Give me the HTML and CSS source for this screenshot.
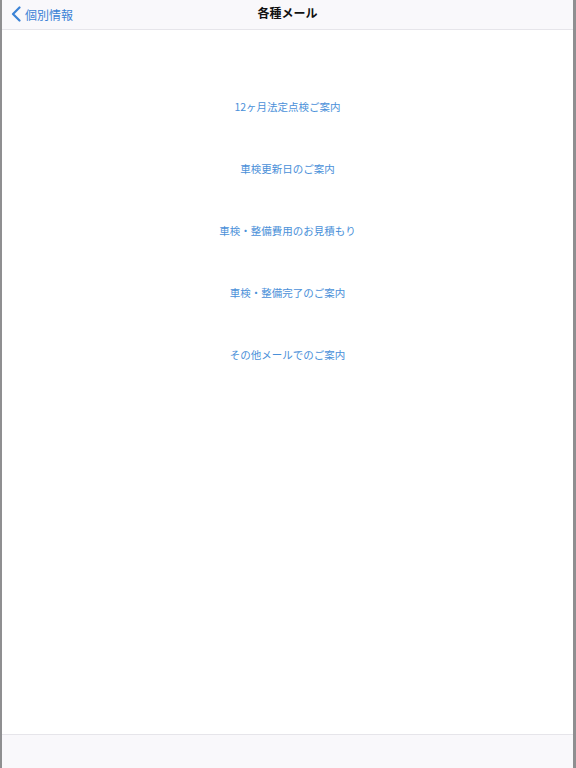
FILE: index.html
```html
<!DOCTYPE html>
<html lang="ja">
<head>
<meta charset="utf-8">
<title>各種メール</title>
<link rel="stylesheet" href="styles.css">
</head>
<body>
<div class="sheet">
  <header class="navbar">
    <a class="back" href="#">
      <svg class="chev" width="10" height="16" viewBox="0 0 10 16"><path d="M8.5 1.5 L2 8 L8.5 14.5" fill="none" stroke="#3b82d6" stroke-width="2.2" stroke-linecap="round" stroke-linejoin="round"/></svg>
      <span>個別情報</span>
    </a>
    <h1 class="title">各種メール</h1>
  </header>
  <main class="content">
    <ul class="menu">
      <li class="item"><a href="#">12ヶ月法定点検ご案内</a></li>
      <li class="item"><a href="#">車検更新日のご案内</a></li>
      <li class="item"><a href="#">車検・整備費用のお見積もり</a></li>
      <li class="item"><a href="#">車検・整備完了のご案内</a></li>
      <li class="item"><a href="#">その他メールでのご案内</a></li>
    </ul>
  </main>
  <footer class="toolbar"></footer>
</div>
</body>
</html>
```

FILE: styles.css
```css
html, body {
  margin: 0;
  padding: 0;
  height: 100%;
}
body {
  background: #8f8f91;
  font-family: "Noto Sans CJK JP", "Noto Sans", sans-serif;
}
.sheet {
  margin: 0 3px 0 2px;
  height: 768px;
  background: #ffffff;
  display: flex;
  flex-direction: column;
}
.navbar {
  height: 29px;
  border-bottom: 1px solid #e6e5ea;
  background: #f9f8fb;
  display: flex;
  align-items: center;
  justify-content: center;
  position: relative;
}
.back {
  position: absolute;
  left: 9px;
  top: 0;
  height: 28px;
  display: flex;
  align-items: center;
  gap: 4px;
  color: #3b82d6;
  text-decoration: none;
  font-size: 12px;
}
.chev {
  display: block;
}
.title {
  margin: 0;
  font-size: 12px;
  font-weight: 700;
  color: #111111;
  line-height: 1;
  margin-top: -3px;
}
.content {
  flex: 1;
  background: #ffffff;
}
.menu {
  list-style: none;
  margin: 0;
  padding: 46px 0 0;
}
.item {
  height: 62px;
  display: flex;
  align-items: center;
  justify-content: center;
}
.item a {
  color: #4a90d9;
  text-decoration: none;
  font-size: 10.5px;
  line-height: 1;
}
.toolbar {
  height: 33px;
  border-top: 1px solid #e6e5ea;
  background: #f9f8fb;
}
```
